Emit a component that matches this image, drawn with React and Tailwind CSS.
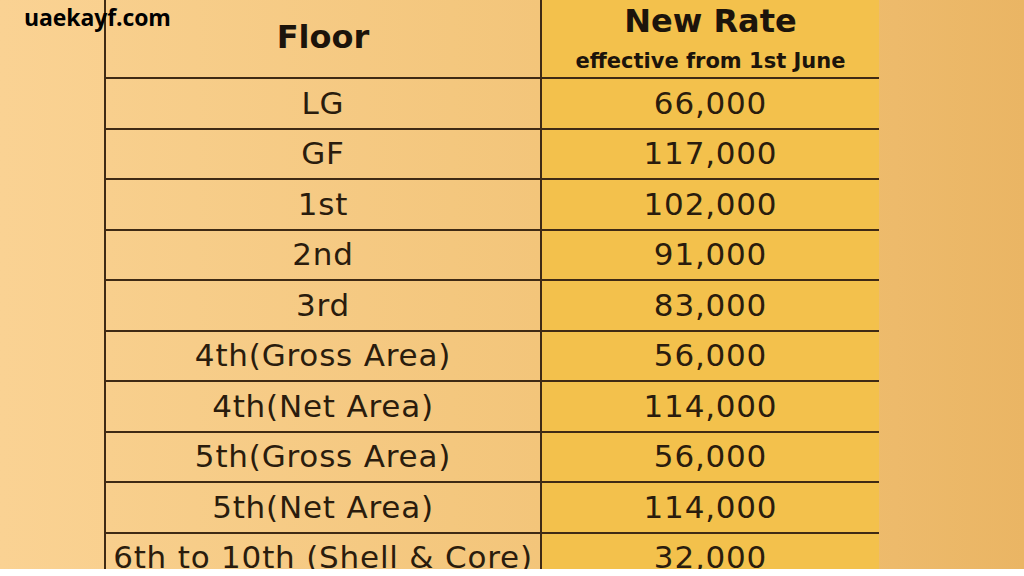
import React from "react";

const rows = [
  ["LG", "66,000"],
  ["GF", "117,000"],
  ["1st", "102,000"],
  ["2nd", "91,000"],
  ["3rd", "83,000"],
  ["4th(Gross Area)", "56,000"],
  ["4th(Net Area)", "114,000"],
  ["5th(Gross Area)", "56,000"],
  ["5th(Net Area)", "114,000"],
  ["6th to 10th (Shell & Core)", "32,000"],
];

const font = { fontFamily: "'DejaVu Sans', 'Noto Sans', sans-serif" };

const App = () => {
  return (
    <div className="w-[1024px] h-[576px] bg-white overflow-hidden">
      <div
        className="relative h-[569px] overflow-hidden bg-gradient-to-r from-[#fad293] via-[#f6c97f] to-[#eab564]"
        style={font}
      >
        <div
          className="absolute left-[24px] top-[0px] text-[23px] font-bold text-black z-10 tracking-[-0.1px]"
          style={{ fontFamily: "'Open Sans', sans-serif" }}
        >
          uaekayf.com
        </div>

        <div className="ml-[104px] w-[773px] grid grid-cols-[436px_337px] border-l-2 border-r-2 border-[#3f2a14] text-[#2a1c0d]">
          <div className="h-[79px] border-b-2 border-r-2 border-[#3f2a14] bg-gradient-to-r from-[#f8cf8d] to-[#f3c57a] flex items-center justify-center pb-[4px]">
            <span className="text-[32px] font-bold text-[#1c140b]">Floor</span>
          </div>
          <div className="h-[79px] border-b-2 border-[#3f2a14] bg-[#f3c14c] flex flex-col items-center">
            <span className="text-[32px] font-bold leading-[42px] text-[#1c140b]">New Rate</span>
            <span className="text-[21px] font-bold leading-[24px] mt-[7px] text-[#1c140b]">effective from 1st June</span>
          </div>

          {rows.map(([floor, rate]) => (
            <React.Fragment key={floor}>
              <div className="h-[50.5px] border-b-2 border-r-2 border-[#3f2a14] bg-gradient-to-r from-[#f8cf8d] to-[#f3c57a] flex items-center justify-center overflow-visible">
                <span className="text-[31px] leading-none tracking-[0.8px] whitespace-nowrap">{floor}</span>
              </div>
              <div className="h-[50.5px] border-b-2 border-[#3f2a14] bg-[#f3c14c] flex items-center justify-center">
                <span className="text-[31px] leading-none tracking-[0.8px] whitespace-nowrap">{rate}</span>
              </div>
            </React.Fragment>
          ))}
        </div>
      </div>
    </div>
  );
};

export default App;
